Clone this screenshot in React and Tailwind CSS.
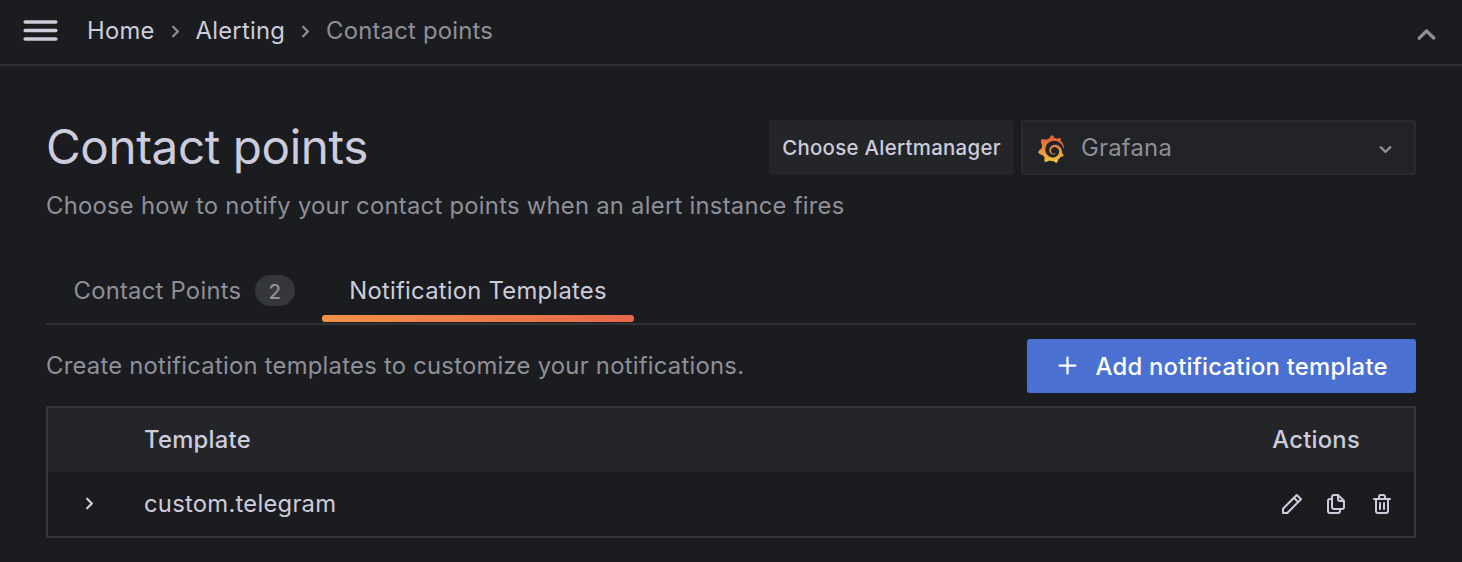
import { SiGrafana } from "react-icons/si";

const paths = {
  bars: "M3,8H21a1,1,0,0,0,0-2H3A1,1,0,0,0,3,8Zm18,8H3a1,1,0,0,0,0,2H21a1,1,0,0,0,0-2Zm0-5H3a1,1,0,0,0,0,2H21a1,1,0,0,0,0-2Z",
  angleRight:
    "M14.83,11.29,10.59,7.05a1,1,0,0,0-1.42,0,1,1,0,0,0,0,1.41L12.71,12,9.17,15.54a1,1,0,0,0,0,1.41,1,1,0,0,0,.71.29,1,1,0,0,0,.71-.29l4.24-4.24A1,1,0,0,0,14.83,11.29Z",
  angleDown:
    "M17,9.17a1,1,0,0,0-1.41,0L12,12.71,8.46,9.17a1,1,0,0,0-1.41,0,1,1,0,0,0,0,1.42l4.24,4.24a1,1,0,0,0,1.42,0L17,10.59A1,1,0,0,0,17,9.17Z",
  angleUp:
    "M17,13.41,12.71,9.17a1,1,0,0,0-1.42,0L7.05,13.41a1,1,0,0,0,0,1.42,1,1,0,0,0,1.41,0L12,11.29l3.54,3.54a1,1,0,0,0,.7.29,1,1,0,0,0,.71-.29A1,1,0,0,0,17,13.41Z",
  plus: "M19,11H13V5a1,1,0,0,0-2,0v6H5a1,1,0,0,0,0,2h6v6a1,1,0,0,0,2,0V13h6a1,1,0,0,0,0-2Z",
  pen: "M22,7.24a1,1,0,0,0-.29-.71L17.47,2.29A1,1,0,0,0,16.76,2a1,1,0,0,0-.71.29L13.22,5.12h0L2.29,16.05a1,1,0,0,0-.29.71V21a1,1,0,0,0,1,1H7.24A1,1,0,0,0,8,21.71L18.87,10.78h0L21.71,8a1.19,1.19,0,0,0,.22-.33,1,1,0,0,0,0-.24.7.7,0,0,0,0-.14ZM6.83,20H4V17.17l9.93-9.93,2.83,2.83ZM18.17,8.66,15.34,5.83l1.42-1.41,2.82,2.82Z",
  copy: "M21,8.94a1.31,1.31,0,0,0-.06-.27l0-.09a1.07,1.07,0,0,0-.19-.28h0l-6-6h0a1.07,1.07,0,0,0-.28-.19.32.32,0,0,0-.09,0A.88.88,0,0,0,14.05,2H10A3,3,0,0,0,7,5V6H6A3,3,0,0,0,3,9V19a3,3,0,0,0,3,3h8a3,3,0,0,0,3-3V18h1a3,3,0,0,0,3-3V9S21,9,21,8.94ZM15,5.41,17.59,8H16a1,1,0,0,1-1-1ZM15,19a1,1,0,0,1-1,1H6a1,1,0,0,1-1-1V9A1,1,0,0,1,6,8H7v7a3,3,0,0,0,3,3h5Zm4-4a1,1,0,0,1-1,1H10a1,1,0,0,1-1-1V5a1,1,0,0,1,1-1h3V7a3,3,0,0,0,3,3h3Z",
  trash:
    "M10,18a1,1,0,0,0,1-1V11a1,1,0,0,0-2,0v6A1,1,0,0,0,10,18ZM20,6H16V5a3,3,0,0,0-3-3H11A3,3,0,0,0,8,5V6H4A1,1,0,0,0,4,8H5V19a3,3,0,0,0,3,3h8a3,3,0,0,0,3-3V8h1a1,1,0,0,0,0-2ZM10,5a1,1,0,0,1,1-1h2a1,1,0,0,1,1,1V6H10Zm7,14a1,1,0,0,1-1,1H8a1,1,0,0,1-1-1V8H17Zm-3-1a1,1,0,0,0,1-1V11a1,1,0,0,0-2,0v6A1,1,0,0,0,14,18Z",
};

function Icon({ name, className }) {
  return (
    <svg viewBox="0 0 24 24" fill="currentColor" className={`block shrink-0 ${className}`} aria-hidden="true">
      <path d={paths[name]} />
    </svg>
  );
}

function TopBar() {
  return (
    <header className="flex h-[66px] items-center border-b-2 border-[#303135] pb-1 pl-5 pr-[15px]">
      <button aria-label="Toggle menu">
        <Icon name="bars" className="size-[41px]" />
      </button>
      <nav className="ml-[26px] flex items-center whitespace-nowrap pt-[2px] text-[23.8px] leading-9 tracking-[0.23px]">
        <a>Home</a>
        <Icon name="angleRight" className="mx-[7px] mt-[1px] size-[27px] text-[#8f8f9a]" />
        <a>Alerting</a>
        <Icon name="angleRight" className="mx-[7px] mt-[1px] size-[27px] text-[#8f8f9a]" />
        <span className="text-[#8f8f9a]">Contact points</span>
      </nav>
      <button aria-label="Collapse" className="ml-auto pt-2 text-[#8f8f9a]">
        <Icon name="angleUp" className="size-[41px]" />
      </button>
    </header>
  );
}

function AlertmanagerPicker() {
  return (
    <div className="flex h-[55px] gap-[7px]">
      <label className="flex w-[245px] items-center justify-center whitespace-nowrap rounded-[3px] bg-[#242529] pt-[2px] text-[20.4px] font-medium tracking-[0.3px]">
        Choose Alertmanager
      </label>
      <div className="flex w-[395px] items-center rounded-[3px] border-2 border-[#2a2b30] bg-[#222327] px-[15px] text-[23.8px] tracking-[0.25px] text-[#8f8f9a]">
        <svg width="0" height="0" className="absolute">
          <linearGradient id="flame" x1="0" y1="0" x2="0" y2="1">
            <stop offset="0" stopColor="#e2553a" />
            <stop offset="1" stopColor="#f3c63d" />
          </linearGradient>
        </svg>
        <SiGrafana fill="url(#flame)" className="-ml-[1.5px] mt-[3px] size-7 shrink-0" />
        <span className="ml-[16.5px]">Grafana</span>
        <Icon name="angleDown" className="ml-auto mt-[3px] size-[27px]" />
      </div>
    </div>
  );
}

function Tabs() {
  return (
    <div className="mt-[34px] flex h-[67px] border-b-2 border-[#303135] text-[23.8px] leading-9 tracking-[0.25px]">
      <div className="flex w-[276px] items-center whitespace-nowrap pl-[27.5px] text-[#8f8f9a]">
        Contact Points
        <span className="ml-[13.5px] flex h-[31px] w-10 items-center justify-center rounded-full bg-[#36373c] pt-[2px] text-[20.4px] font-medium">
          2
        </span>
      </div>
      <div className="relative flex w-[312px] items-center justify-center whitespace-nowrap">
        Notification Templates
        <span className="absolute inset-x-0 bottom-[1px] h-[7px] rounded-[3px] bg-linear-to-r from-[#f29147] to-[#e7674a]" />
      </div>
    </div>
  );
}

function TemplatesTable() {
  return (
    <div className="mt-[13px] h-[132px] border-2 border-[#36373b] text-[23.8px] leading-9 tracking-[0.25px]">
      <div className="flex h-16 items-center bg-[#242529] pl-24 pr-[54px] font-medium">
        <span>Template</span>
        <span className="ml-auto">Actions</span>
      </div>
      <div className="flex h-16 items-center pl-[28px] pr-5">
        <Icon name="angleRight" className="-mt-[1px] size-[27px]" />
        <span className="ml-[41px]">custom.telegram</span>
        <div className="ml-auto flex">
          <Icon name="pen" className="mr-5 size-6" />
          <Icon name="copy" className="mr-[22px] size-6" />
          <Icon name="trash" className="size-6" />
        </div>
      </div>
    </div>
  );
}

export default function App() {
  return (
    <div className="h-[562px] w-[1462px] overflow-hidden bg-[#1b1c1f] font-['Inter',sans-serif] text-[#ccccdc]">
      <TopBar />
      <main className="px-[46px] pt-[54px]">
        <div className="flex justify-between">
          <h1 className="-mt-[1px] whitespace-nowrap text-[47.6px] leading-[55px] tracking-[-0.41px]">Contact points</h1>
          <AlertmanagerPicker />
        </div>
        <p className="mt-[13px] text-[23.8px] leading-9 tracking-[0.26px] text-[#8f8f9a]">
          Choose how to notify your contact points when an alert instance fires
        </p>
        <Tabs />
        <div className="mt-[14px] flex h-[54px] items-center justify-between text-[23.8px] leading-9 tracking-[0.25px]">
          <p className="text-[#8f8f9a]">Create notification templates to customize your notifications.</p>
          <button className="flex h-[54px] w-[389px] items-center whitespace-nowrap rounded-[3px] bg-[#4a71d2] pl-[27px] font-medium text-white">
            <Icon name="plus" className="-mt-[2px] size-[27px]" />
            <span className="ml-[14.5px] pt-[2px]">Add notification template</span>
          </button>
        </div>
        <TemplatesTable />
      </main>
    </div>
  );
}
